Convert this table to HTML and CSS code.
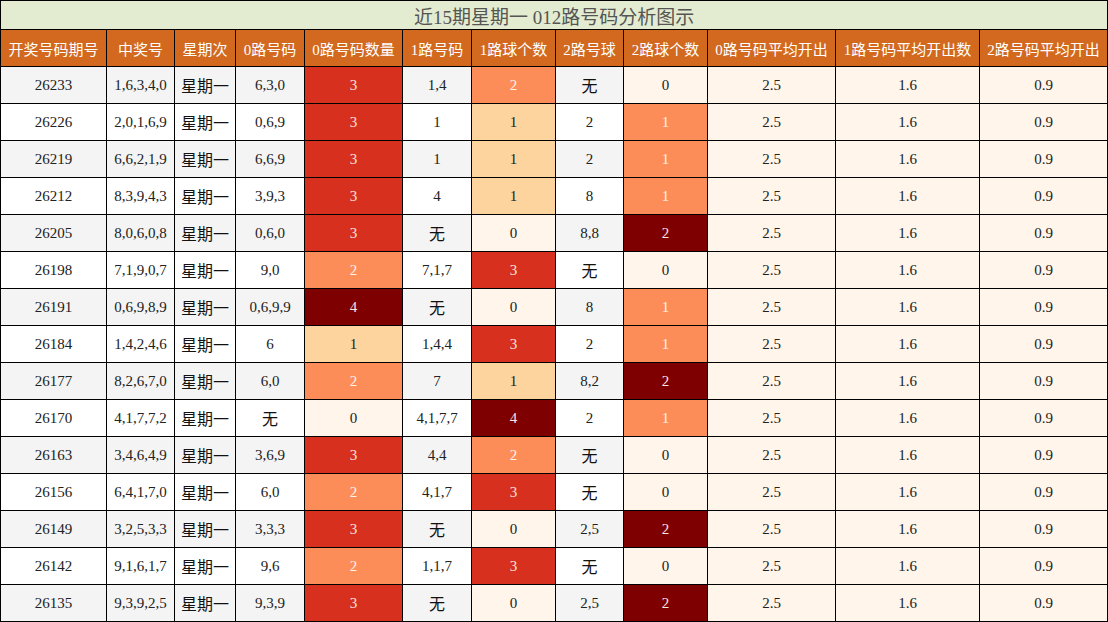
FILE: index.html
```html
<!DOCTYPE html>
<html lang="zh-CN">
<head>
<meta charset="utf-8">
<title>近15期星期一 012路号码分析图示</title>
<link rel="stylesheet" href="styles.css">
</head>
<body>
<table class="grid">
<colgroup>
<col class="w106"><col class="w68"><col class="w61"><col class="w69"><col class="w98"><col class="w69"><col class="w84"><col class="w68"><col class="w84"><col class="w128"><col class="w144"><col class="w128">
</colgroup>
<thead>
<tr class="title-row"><th colspan="12">近15期星期一 012路号码分析图示</th></tr>
<tr class="head-row">
<th>开奖号码期号</th><th>中奖号</th><th>星期次</th><th>0路号码</th><th>0路号码数量</th><th>1路号码</th><th>1路球个数</th><th>2路号球</th><th>2路球个数</th><th>0路号码平均开出</th><th>1路号码平均开出数</th><th>2路号码平均开出</th>
</tr>
</thead>
<tbody>
<tr class="odd"><td>26233</td><td>1,6,3,4,0</td><td class="zh">星期一</td><td>6,3,0</td><td class="h3">3</td><td>1,4</td><td class="h2">2</td><td class="zh">无</td><td class="h0">0</td><td class="avg">2.5</td><td class="avg">1.6</td><td class="avg">0.9</td></tr>
<tr><td>26226</td><td>2,0,1,6,9</td><td class="zh">星期一</td><td>0,6,9</td><td class="h3">3</td><td>1</td><td class="h1">1</td><td>2</td><td class="h2">1</td><td class="avg">2.5</td><td class="avg">1.6</td><td class="avg">0.9</td></tr>
<tr class="odd"><td>26219</td><td>6,6,2,1,9</td><td class="zh">星期一</td><td>6,6,9</td><td class="h3">3</td><td>1</td><td class="h1">1</td><td>2</td><td class="h2">1</td><td class="avg">2.5</td><td class="avg">1.6</td><td class="avg">0.9</td></tr>
<tr><td>26212</td><td>8,3,9,4,3</td><td class="zh">星期一</td><td>3,9,3</td><td class="h3">3</td><td>4</td><td class="h1">1</td><td>8</td><td class="h2">1</td><td class="avg">2.5</td><td class="avg">1.6</td><td class="avg">0.9</td></tr>
<tr class="odd"><td>26205</td><td>8,0,6,0,8</td><td class="zh">星期一</td><td>0,6,0</td><td class="h3">3</td><td class="zh">无</td><td class="h0">0</td><td>8,8</td><td class="h4">2</td><td class="avg">2.5</td><td class="avg">1.6</td><td class="avg">0.9</td></tr>
<tr><td>26198</td><td>7,1,9,0,7</td><td class="zh">星期一</td><td>9,0</td><td class="h2">2</td><td>7,1,7</td><td class="h3">3</td><td class="zh">无</td><td class="h0">0</td><td class="avg">2.5</td><td class="avg">1.6</td><td class="avg">0.9</td></tr>
<tr class="odd"><td>26191</td><td>0,6,9,8,9</td><td class="zh">星期一</td><td>0,6,9,9</td><td class="h4">4</td><td class="zh">无</td><td class="h0">0</td><td>8</td><td class="h2">1</td><td class="avg">2.5</td><td class="avg">1.6</td><td class="avg">0.9</td></tr>
<tr><td>26184</td><td>1,4,2,4,6</td><td class="zh">星期一</td><td>6</td><td class="h1">1</td><td>1,4,4</td><td class="h3">3</td><td>2</td><td class="h2">1</td><td class="avg">2.5</td><td class="avg">1.6</td><td class="avg">0.9</td></tr>
<tr class="odd"><td>26177</td><td>8,2,6,7,0</td><td class="zh">星期一</td><td>6,0</td><td class="h2">2</td><td>7</td><td class="h1">1</td><td>8,2</td><td class="h4">2</td><td class="avg">2.5</td><td class="avg">1.6</td><td class="avg">0.9</td></tr>
<tr><td>26170</td><td>4,1,7,7,2</td><td class="zh">星期一</td><td class="zh">无</td><td class="h0">0</td><td>4,1,7,7</td><td class="h4">4</td><td>2</td><td class="h2">1</td><td class="avg">2.5</td><td class="avg">1.6</td><td class="avg">0.9</td></tr>
<tr class="odd"><td>26163</td><td>3,4,6,4,9</td><td class="zh">星期一</td><td>3,6,9</td><td class="h3">3</td><td>4,4</td><td class="h2">2</td><td class="zh">无</td><td class="h0">0</td><td class="avg">2.5</td><td class="avg">1.6</td><td class="avg">0.9</td></tr>
<tr><td>26156</td><td>6,4,1,7,0</td><td class="zh">星期一</td><td>6,0</td><td class="h2">2</td><td>4,1,7</td><td class="h3">3</td><td class="zh">无</td><td class="h0">0</td><td class="avg">2.5</td><td class="avg">1.6</td><td class="avg">0.9</td></tr>
<tr class="odd"><td>26149</td><td>3,2,5,3,3</td><td class="zh">星期一</td><td>3,3,3</td><td class="h3">3</td><td class="zh">无</td><td class="h0">0</td><td>2,5</td><td class="h4">2</td><td class="avg">2.5</td><td class="avg">1.6</td><td class="avg">0.9</td></tr>
<tr><td>26142</td><td>9,1,6,1,7</td><td class="zh">星期一</td><td>9,6</td><td class="h2">2</td><td>1,1,7</td><td class="h3">3</td><td class="zh">无</td><td class="h0">0</td><td class="avg">2.5</td><td class="avg">1.6</td><td class="avg">0.9</td></tr>
<tr class="odd"><td>26135</td><td>9,3,9,2,5</td><td class="zh">星期一</td><td>9,3,9</td><td class="h3">3</td><td class="zh">无</td><td class="h0">0</td><td>2,5</td><td class="h4">2</td><td class="avg">2.5</td><td class="avg">1.6</td><td class="avg">0.9</td></tr>
</tbody>
</table>
</body>
</html>
```
FILE: styles.css
```css
html, body {
  margin: 0;
  padding: 0;
  background: #ffffff;
}
.grid {
  border-collapse: collapse;
  table-layout: fixed;
  width: 1108px;
  font-family: "Liberation Serif", "Noto Sans CJK SC", serif;
  font-size: 15px;
  color: #222222;
}
.grid th, .grid td {
  border: 1px solid #000000;
  padding: 0;
  text-align: center;
  vertical-align: middle;
  white-space: nowrap;
  overflow: hidden;
}
.w106 { width: 106px; }
.w68 { width: 68px; }
.w61 { width: 61px; }
.w69 { width: 69px; }
.w98 { width: 98px; }
.w84 { width: 84px; }
.w128 { width: 128px; }
.w144 { width: 144px; }
.title-row th {
  height: 28px;
  background: #e3ecd0;
  color: #555555;
  font-size: 19px;
  font-weight: normal;
}
.head-row th {
  height: 36px;
  background: #d2691e;
  color: #ffffff;
  font-weight: normal;
  font-size: 15px;
}
.grid tbody td {
  height: 36px;
  background: #ffffff;
}
.grid tbody tr.odd td {
  background: #f4f4f4;
}
.grid td.zh {
  font-size: 16px;
  color: #111111;
}
.grid tbody td.avg, .grid tbody tr.odd td.avg,
.grid tbody td.h0, .grid tbody tr.odd td.h0 {
  background: #fff5eb;
}
.grid tbody td.h1, .grid tbody tr.odd td.h1 {
  background: #fdd49e;
}
.grid tbody td.h2, .grid tbody tr.odd td.h2 {
  background: #fc8d59;
  color: #fdf3ea;
}
.grid tbody td.h3, .grid tbody tr.odd td.h3 {
  background: #d7301f;
  color: #fbe6de;
}
.grid tbody td.h4, .grid tbody tr.odd td.h4 {
  background: #7f0000;
  color: #f6e6e6;
}
```
